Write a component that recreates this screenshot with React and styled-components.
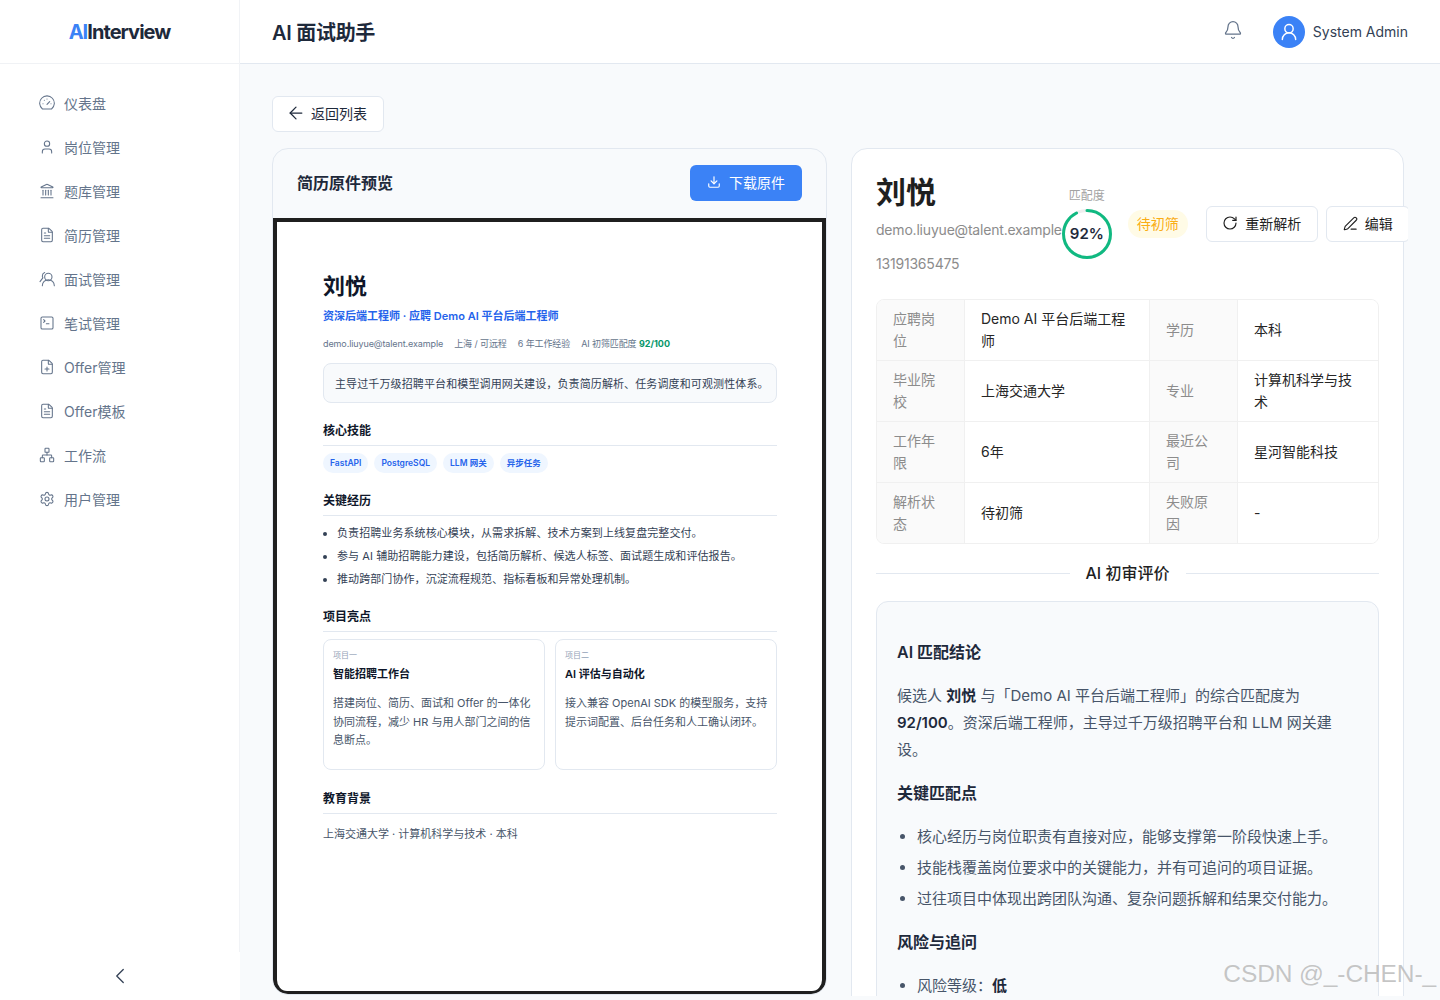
import styled, { createGlobalStyle } from "styled-components";
import {
  ArrowLeft,
  Bell,
  ChevronLeft,
  Download,
  FilePlus,
  FileText,
  Landmark,
  Network,
  PenLine,
  RotateCw,
  Settings,
  SquareTerminal,
  User,
  UserRound,
} from "lucide-react";

const GlobalStyle = createGlobalStyle`
  html, body {
    margin: 0;
    height: 100%;
    overflow: hidden;
    background: #f8fafc;
    font-family: Inter, "Noto Sans CJK SC", sans-serif;
  }
  * { box-sizing: border-box; }
`;

const Layout = styled.div`
  position: relative;
  display: flex;
  width: 1440px;
  height: 1000px;
  overflow: hidden;
`;

const Sidebar = styled.aside`
  flex: 0 0 240px;
  display: flex;
  flex-direction: column;
  background: #fff;
`;

const SidebarBody = styled.div`
  flex: 1;
  border-right: 1px solid #f1f3f6;
`;

const Logo = styled.div`
  height: 64px;
  display: flex;
  align-items: center;
  justify-content: center;
  border-bottom: 1px solid #f0f2f5;
  font-size: 20px;
  font-weight: 700;
  letter-spacing: -0.95px;
  color: #1e293b;

  span {
    color: #3b82f6;
  }
`;

const Nav = styled.nav`
  padding-top: 19px;
  display: flex;
  flex-direction: column;
  gap: 4px;
`;

const NavItem = styled.a`
  height: 40px;
  display: flex;
  align-items: center;
  gap: 9px;
  padding-left: 39px;
  font-size: 14px;
  color: #64748b;

  svg {
    flex: none;
    width: 16px;
    height: 16px;
    stroke-width: 1.6;
  }
`;

const Collapse = styled.div`
  height: 48px;
  display: flex;
  align-items: center;
  justify-content: center;
  background: #fff;
  color: #334155;
`;

const Content = styled.div`
  flex: 1;
  min-width: 0;
  display: flex;
  flex-direction: column;
`;

const TopBar = styled.header`
  flex: 0 0 64px;
  display: flex;
  align-items: center;
  padding: 0 32px;
  background: #fff;
  border-bottom: 1px solid #e2e8f0;
`;

const PageTitle = styled.h1`
  flex: 1;
  margin: 0;
  font-size: 20px;
  font-weight: 600;
  letter-spacing: -0.3px;
  color: #1e293b;
`;

const BellIcon = styled(Bell)`
  color: #64748b;
  margin-right: 30px;
  position: relative;
  top: -2px;
`;

const UserBox = styled.div`
  display: flex;
  align-items: center;
  gap: 8px;
  font-size: 14px;
  font-weight: 400;
  color: #334155;
`;

const Avatar = styled.div`
  width: 32px;
  height: 32px;
  border-radius: 50%;
  background: #3b82f6;
  color: #fff;
  display: flex;
  align-items: center;
  justify-content: center;
`;

const Main = styled.main`
  flex: 1;
  min-height: 0;
  padding: 32px 32px 4px;
  display: flex;
`;

const Clip = styled.div`
  flex: 1;
  overflow: hidden;
`;

const BackButton = styled.button`
  width: 112px;
  height: 36px;
  display: flex;
  align-items: center;
  gap: 5px;
  padding: 0 0 2px 13px;
  border: 1px solid #e2e8f0;
  border-radius: 6px;
  background: #fff;
  font: inherit;
  font-size: 14px;
  color: #1e293b;
`;

const Columns = styled.div`
  display: grid;
  grid-template-columns: 555px 553px;
  gap: 24px;
  margin-top: 16px;
  align-items: start;
`;

const PreviewCard = styled.section`
  height: 847px;
  display: flex;
  flex-direction: column;
  border: 1px solid #e2e8f0;
  border-radius: 16px;
  overflow: hidden;
  background: #f8fafc;
`;

const PreviewHeader = styled.div`
  flex: 0 0 69px;
  display: flex;
  align-items: center;
  justify-content: space-between;
  padding: 0 24px 2px;
`;

const CardTitle = styled.h2`
  margin: 0;
  padding-bottom: 2px;
  font-size: 16px;
  font-weight: 600;
  color: #1e293b;
`;

const PrimaryButton = styled.button`
  width: 112px;
  height: 36px;
  display: flex;
  align-items: center;
  justify-content: center;
  gap: 8px;
  padding: 0 0 2px;
  border: none;
  border-radius: 6px;
  background: #3b82f6;
  color: #fff;
  font: inherit;
  font-size: 14px;
`;

const Sheet = styled.div`
  flex: 1;
  min-height: 0;
  background: #fff;
  border: solid #1f1f1f;
  border-width: 4px 4px 3px;
  border-radius: 0 0 14px 14px;
  padding: 49px 45px 0 46px;
  color: #1e293b;
`;

const ResumeName = styled.div`
  font-size: 22px;
  font-weight: 700;
  line-height: 30px;
  color: #0f172a;
`;

const ResumeRole = styled.div`
  margin-top: 7px;
  font-size: 11px;
  font-weight: 600;
  line-height: 16px;
  color: #2563eb;
`;

const MetaRow = styled.div`
  margin-top: 13px;
  display: flex;
  gap: 11px;
  font-size: 9px;
  letter-spacing: -0.1px;
  line-height: 14px;
  color: #64748b;

  b {
    letter-spacing: 0;
    color: #059669;
  }
`;

const Summary = styled.div`
  margin-top: 12px;
  height: 40px;
  display: flex;
  align-items: center;
  padding-left: 11px;
  border: 1px solid #e2e8f0;
  border-radius: 8px;
  background: #f8fafc;
  font-size: 11px;
  letter-spacing: 0.12px;
  white-space: nowrap;
  color: #334155;
`;

const ResumeSection = styled.div`
  margin-top: ${(p) => p.$top || 19}px;
`;

const SectionTitle = styled.div`
  font-size: 12px;
  font-weight: 700;
  line-height: 18px;
  padding-bottom: 5px;
  border-bottom: 1px solid #e2e8f0;
  color: #0f172a;
`;

const Tags = styled.div`
  display: flex;
  gap: 6px;
  margin-top: 7px;
`;

const Tag = styled.span`
  height: 20px;
  display: flex;
  align-items: center;
  padding: 0 7px;
  border-radius: 10px;
  background: #eff6ff;
  color: #2563eb;
  font-size: 8.5px;
  font-weight: 600;
  line-height: 20px;
`;

const ExpList = styled.ul`
  margin: 6px 0 0;
  padding-left: 14px;
  font-size: 11px;
  letter-spacing: 0.08px;
  line-height: 23px;
  color: #334155;
`;

const Projects = styled.div`
  display: grid;
  grid-template-columns: 1fr 1fr;
  gap: 10px;
  margin-top: 7px;
`;

const ProjectCard = styled.div`
  height: 131px;
  padding: 9px;
  border: 1px solid #e2e8f0;
  border-radius: 8px;
`;

const ProjectLabel = styled.div`
  font-size: 8px;
  line-height: 12px;
  color: #94a3b8;
`;

const ProjectName = styled.div`
  margin-top: 5px;
  font-size: 11px;
  font-weight: 600;
  line-height: 16px;
  color: #0f172a;
`;

const ProjectText = styled.div`
  margin: 12px -6px 0 0;
  font-size: 11px;
  line-height: 18.7px;
  color: #475569;
`;

const Education = styled.div`
  margin-top: 12px;
  font-size: 11px;
  line-height: 16px;
  color: #475569;
`;

const DetailCard = styled.section`
  height: 900px;
  padding: 23px 24px;
  border: 1px solid #e2e8f0;
  border-radius: 16px;
  background: #fff;
`;

const DetailHeader = styled.div`
  display: flex;
  align-items: center;
  height: 104px;
`;

const Identity = styled.div`
  flex: none;
  padding-bottom: 2px;
`;

const CandidateName = styled.div`
  font-size: 30px;
  font-weight: 600;
  line-height: 42px;
  color: #1f1f1f;
`;

const ContactLine = styled.div`
  margin-top: ${(p) => p.$top}px;
  font-size: 14px;
  letter-spacing: -0.2px;
  line-height: 22px;
  color: #8c8c8c;
`;

const Score = styled.div`
  flex: none;
  width: 50px;
  padding-bottom: 1px;
  display: flex;
  flex-direction: column;
  align-items: center;
  font-size: 12px;
  line-height: 16px;
  color: #a3a3a3;
  white-space: nowrap;
`;

const Ring = styled.div`
  position: relative;
  width: 50px;
  height: 50px;
  margin-top: 5px;
`;

const RingValue = styled.div`
  position: absolute;
  inset: 0;
  display: flex;
  align-items: center;
  justify-content: center;
  font-size: 15px;
  font-weight: 600;
  color: #1e293b;
`;

const StatusTag = styled.span`
  flex: none;
  width: 60px;
  height: 28px;
  margin: 0 18px 0 16px;
  padding-bottom: 2px;
  display: flex;
  align-items: center;
  justify-content: center;
  border-radius: 14px;
  background: #fffbe6;
  color: #faad14;
  font-size: 14px;
`;

const GhostButton = styled.button`
  flex: none;
  width: ${(p) => p.$width}px;
  height: 36px;
  margin-right: 8px;
  padding: 0 0 2px;
  display: flex;
  align-items: center;
  justify-content: center;
  gap: 7px;
  border: 1px solid #e2e8f0;
  border-radius: 6px;
  background: #fff;
  color: #1f1f1f;
  font: inherit;
  font-size: 14px;
`;

const InfoGrid = styled.div`
  margin-top: 23px;
  display: grid;
  grid-template-columns: 88px 185px 88px 142px;
  grid-template-rows: 61px 61px 61px 60px;
  border: 1px solid #f0f0f0;
  border-radius: 8px;
  overflow: hidden;
  font-size: 14px;
  line-height: 22px;
`;

const InfoCell = styled.div`
  display: flex;
  align-items: center;
  padding: 0 16px;
  border-bottom: 1px solid #f0f0f0;
  border-right: 1px solid #f0f0f0;
  background: ${(p) => (p.$label ? "#fafafa" : "#fff")};
  color: ${(p) => (p.$label ? "#8c8c8c" : "#262626")};

  &:nth-child(4n) {
    border-right: none;
  }
  &:nth-last-child(-n + 4) {
    border-bottom: none;
  }
`;

const Divider = styled.div`
  margin-top: 17px;
  display: flex;
  align-items: center;
  gap: 16px;
  font-size: 16px;
  font-weight: 500;
  line-height: 24px;
  color: #1f1f1f;

  &::before,
  &::after {
    content: "";
    flex: 1;
    height: 1px;
    background: #e2e8f0;
  }
`;

const ReviewBox = styled.div`
  margin-top: 16px;
  padding: 20px;
  border: 1px solid #e2e8f0;
  border-radius: 12px;
  background: #f8fafc;
  font-size: 15px;
  line-height: 27px;
  color: #475569;

  b {
    font-weight: 600;
    color: #1e293b;
  }
`;

const ReviewTitle = styled.h3`
  margin: 18px 0;
  font-size: 16px;
  font-weight: 600;
  line-height: 24px;
  color: #1e293b;
`;

const ReviewText = styled.p`
  margin: 18px 0;
`;

const ReviewList = styled.ul`
  margin: 18px 0;
  padding-left: 20px;

  li + li {
    margin-top: 4px;
  }
`;

const Watermark = styled.div`
  position: absolute;
  right: 4px;
  bottom: 8px;
  font-family: "Liberation Sans", sans-serif;
  font-size: 24.5px;
  letter-spacing: -0.1px;
  line-height: 36px;
  color: rgba(140, 140, 140, 0.5);
  text-shadow: 0 0 1px rgba(255, 255, 255, 0.8);
  white-space: nowrap;
`;

function GaugeIcon() {
  return (
    <svg viewBox="0 0 24 24" fill="none" stroke="currentColor" strokeLinecap="round" strokeLinejoin="round">
      <path d="M5.2 21A11 11 0 1 1 18.8 21Z" />
      <path d="M12 14l4-4" />
      <path d="M6 13h.01M8 8h.01M12 6h.01M18 13h.01" />
    </svg>
  );
}

function InterviewIcon() {
  return (
    <svg viewBox="0 0 24 24" fill="none" stroke="currentColor" strokeLinecap="round" strokeLinejoin="round">
      <circle cx="14" cy="9" r="5.5" />
      <path d="M5 22a9 9 0 0 1 18 0" />
      <path d="M8.5 2.4A5.5 5.5 0 0 0 5 7.5c0 1 .3 2 .8 2.8L1.5 16" />
    </svg>
  );
}

const navItems = [
  { label: "仪表盘", icon: <GaugeIcon /> },
  { label: "岗位管理", icon: <User /> },
  { label: "题库管理", icon: <Landmark /> },
  { label: "简历管理", icon: <FileText /> },
  { label: "面试管理", icon: <InterviewIcon /> },
  { label: "笔试管理", icon: <SquareTerminal /> },
  { label: "Offer管理", icon: <FilePlus /> },
  { label: "Offer模板", icon: <FileText /> },
  { label: "工作流", icon: <Network /> },
  { label: "用户管理", icon: <Settings /> },
];

const infoRows = [
  ["应聘岗位", "Demo AI 平台后端工程师", "学历", "本科"],
  ["毕业院校", "上海交通大学", "专业", "计算机科学与技术"],
  ["工作年限", "6年", "最近公司", "星河智能科技"],
  ["解析状态", "待初筛", "失败原因", "-"],
];

function ScoreRing({ value }) {
  const r = 23.5;
  const length = 2 * Math.PI * r;
  return (
    <Ring>
      <svg width="50" height="50" viewBox="0 0 50 50">
        <circle cx="25" cy="25" r={r} fill="none" stroke="#eeeeee" strokeWidth="3" />
        <circle
          cx="25"
          cy="25"
          r={r}
          fill="none"
          stroke="#10b981"
          strokeWidth="3"
          strokeLinecap="round"
          strokeDasharray={`${(length * value) / 100} ${length}`}
          transform="rotate(-90 25 25)"
        />
      </svg>
      <RingValue>{value}%</RingValue>
    </Ring>
  );
}

export default function App() {
  return (
    <Layout>
      <GlobalStyle />
      <Sidebar>
        <SidebarBody>
          <Logo>
            <span>AI</span>Interview
          </Logo>
          <Nav>
            {navItems.map((item) => (
              <NavItem key={item.label}>
                {item.icon}
                {item.label}
              </NavItem>
            ))}
          </Nav>
        </SidebarBody>
        <Collapse>
          <ChevronLeft size={26} strokeWidth={1.2} />
        </Collapse>
      </Sidebar>

      <Content>
        <TopBar>
          <PageTitle>AI 面试助手</PageTitle>
          <BellIcon size={20} strokeWidth={1.5} />
          <UserBox>
            <Avatar>
              <UserRound size={20} strokeWidth={1.75} />
            </Avatar>
            System Admin
          </UserBox>
        </TopBar>

        <Main>
          <Clip>
            <BackButton>
              <ArrowLeft size={20} strokeWidth={1.5} />
              返回列表
            </BackButton>
            <Columns>
              <PreviewCard>
                <PreviewHeader>
                  <CardTitle>简历原件预览</CardTitle>
                  <PrimaryButton>
                    <Download size={14} />
                    下载原件
                  </PrimaryButton>
                </PreviewHeader>
                <Sheet>
                  <ResumeName>刘悦</ResumeName>
                  <ResumeRole>资深后端工程师 · 应聘 Demo AI 平台后端工程师</ResumeRole>
                  <MetaRow>
                    <span>demo.liuyue@talent.example</span>
                    <span>上海 / 可远程</span>
                    <span>6 年工作经验</span>
                    <span>
                      AI 初筛匹配度 <b>92/100</b>
                    </span>
                  </MetaRow>
                  <Summary>主导过千万级招聘平台和模型调用网关建设，负责简历解析、任务调度和可观测性体系。</Summary>

                  <ResumeSection>
                    <SectionTitle>核心技能</SectionTitle>
                    <Tags>
                      <Tag>FastAPI</Tag>
                      <Tag>PostgreSQL</Tag>
                      <Tag>LLM 网关</Tag>
                      <Tag>异步任务</Tag>
                    </Tags>
                  </ResumeSection>

                  <ResumeSection>
                    <SectionTitle>关键经历</SectionTitle>
                    <ExpList>
                      <li>负责招聘业务系统核心模块，从需求拆解、技术方案到上线复盘完整交付。</li>
                      <li>参与 AI 辅助招聘能力建设，包括简历解析、候选人标签、面试题生成和评估报告。</li>
                      <li>推动跨部门协作，沉淀流程规范、指标看板和异常处理机制。</li>
                    </ExpList>
                  </ResumeSection>

                  <ResumeSection $top={17}>
                    <SectionTitle>项目亮点</SectionTitle>
                    <Projects>
                      <ProjectCard>
                        <ProjectLabel>项目一</ProjectLabel>
                        <ProjectName>智能招聘工作台</ProjectName>
                        <ProjectText>搭建岗位、简历、面试和 Offer 的一体化协同流程，减少 HR 与用人部门之间的信息断点。</ProjectText>
                      </ProjectCard>
                      <ProjectCard>
                        <ProjectLabel>项目二</ProjectLabel>
                        <ProjectName>AI 评估与自动化</ProjectName>
                        <ProjectText>接入兼容 OpenAI SDK 的模型服务，支持提示词配置、后台任务和人工确认闭环。</ProjectText>
                      </ProjectCard>
                    </Projects>
                  </ResumeSection>

                  <ResumeSection $top={20}>
                    <SectionTitle>教育背景</SectionTitle>
                    <Education>上海交通大学 · 计算机科学与技术 · 本科</Education>
                  </ResumeSection>
                </Sheet>
              </PreviewCard>

              <DetailCard>
                <DetailHeader>
                  <Identity>
                    <CandidateName>刘悦</CandidateName>
                    <ContactLine $top={6}>demo.liuyue@talent.example</ContactLine>
                    <ContactLine $top={12}>13191365475</ContactLine>
                  </Identity>
                  <Score>
                    匹配度
                    <ScoreRing value={92} />
                  </Score>
                  <StatusTag>待初筛</StatusTag>
                  <GhostButton $width={112}>
                    <RotateCw size={16} strokeWidth={1.75} />
                    重新解析
                  </GhostButton>
                  <GhostButton $width={84}>
                    <PenLine size={15} strokeWidth={1.75} />
                    编辑
                  </GhostButton>
                </DetailHeader>

                <InfoGrid>
                  {infoRows.flatMap((row) =>
                    row.map((text, i) => (
                      <InfoCell key={text} $label={i % 2 === 0}>
                        {text}
                      </InfoCell>
                    ))
                  )}
                </InfoGrid>

                <Divider>AI 初审评价</Divider>

                <ReviewBox>
                  <ReviewTitle>AI 匹配结论</ReviewTitle>
                  <ReviewText>
                    候选人 <b>刘悦</b> 与「Demo AI 平台后端工程师」的综合匹配度为 <b>92/100</b>。资深后端工程师，主导过千万级招聘平台和 LLM 网关建设。
                  </ReviewText>
                  <ReviewTitle>关键匹配点</ReviewTitle>
                  <ReviewList>
                    <li>核心经历与岗位职责有直接对应，能够支撑第一阶段快速上手。</li>
                    <li>技能栈覆盖岗位要求中的关键能力，并有可追问的项目证据。</li>
                    <li>过往项目中体现出跨团队沟通、复杂问题拆解和结果交付能力。</li>
                  </ReviewList>
                  <ReviewTitle>风险与追问</ReviewTitle>
                  <ReviewList>
                    <li>
                      风险等级：<b>低</b>
                    </li>
                  </ReviewList>
                </ReviewBox>
              </DetailCard>
            </Columns>
          </Clip>
        </Main>
      </Content>
      <Watermark>CSDN @_-CHEN-_</Watermark>
    </Layout>
  );
}
